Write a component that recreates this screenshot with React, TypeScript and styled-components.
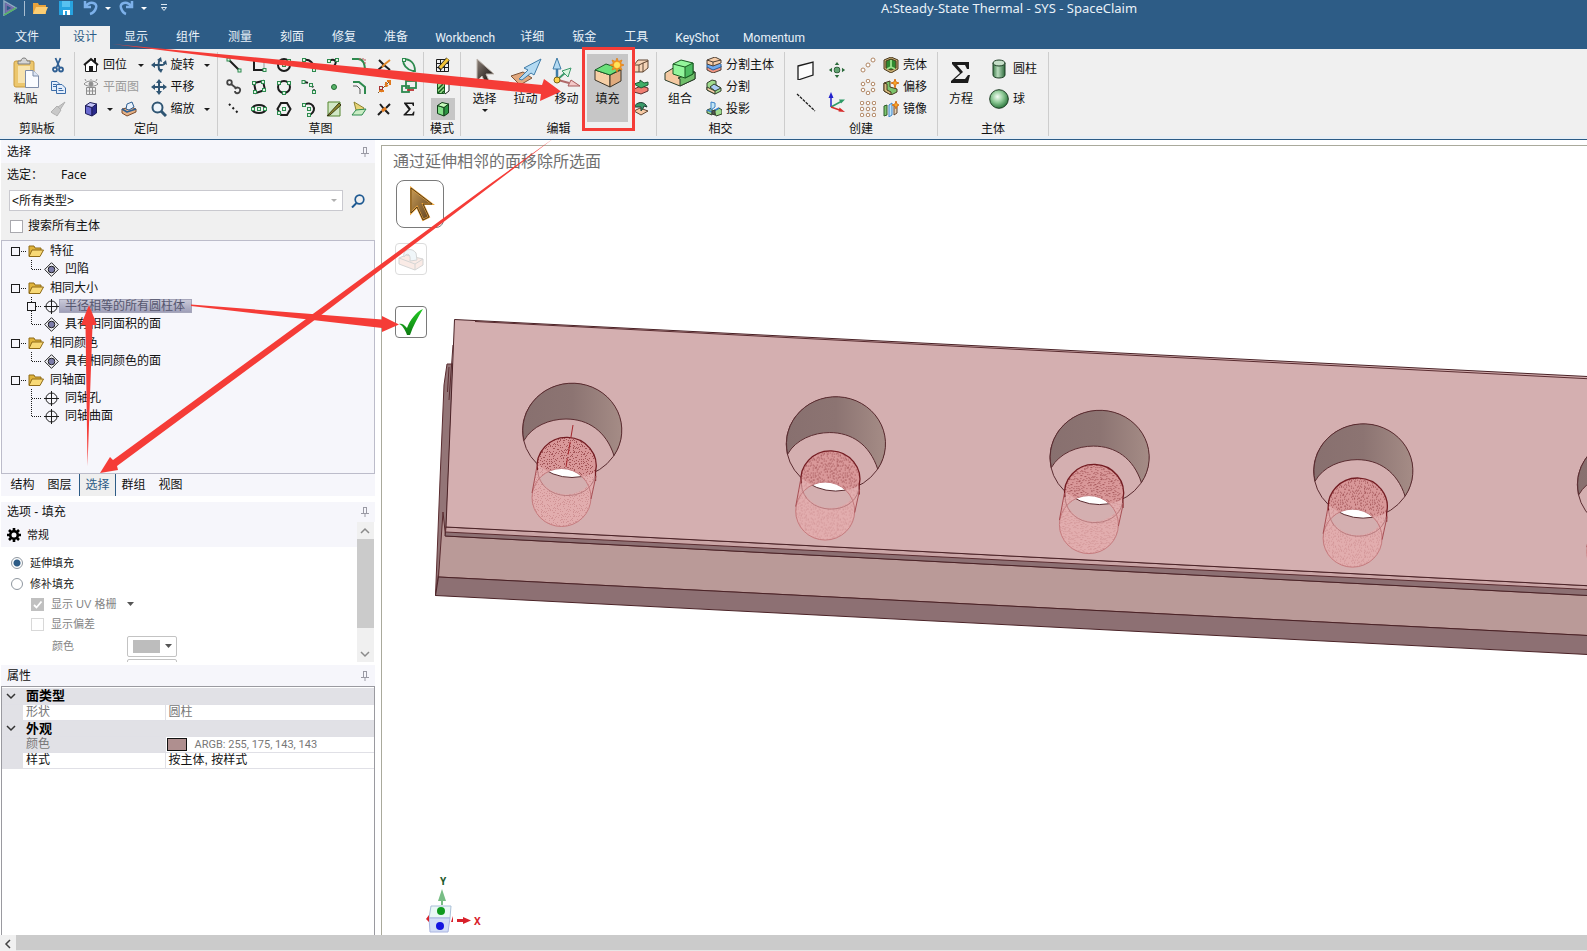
import React from "react";
import styled, { createGlobalStyle, css } from "styled-components";

const GlobalStyle = createGlobalStyle`
  * { box-sizing: border-box; }
  html, body { margin: 0; padding: 0; }
  body {
    background: #fff;
    color: #111;
    font: 12px/16px "Liberation Sans", "Noto Sans CJK SC", sans-serif;
    overflow: hidden;
  }
  button, input, select { font: inherit; color: inherit; margin: 0; }
  button { background: none; border: 0; padding: 0; cursor: default; }
  svg { display: block; flex: none; }
`;

/* ---------- icons ---------- */

const K = "#1c1c1c";
const G = "#2d8a4e";

const Dots = ({ at, c = G }: { at: number[][]; c?: string }) => (
  <>
    {at.map(([x, y], i) => (
      <rect key={i} x={x - 1.5} y={y - 1.5} width="3" height="3" fill="#dff2e4" stroke={c} />
    ))}
  </>
);

const Cube = ({ top, left, right, line }: { top: string; left: string; right: string; line: string }) => (
  <g stroke={line} strokeLinejoin="round">
    <path d="M2.500 4.500 9 6.500V15L2.500 12.500Z" fill={left} />
    <path d="M9 6.500 13.500 3V12L9 15Z" fill={right} />
    <path d="M2.500 4.500 7 1.500 13.500 3 9 6.500Z" fill={top} />
  </g>
);

const icons: Record<string, React.ReactNode> = {
  cut: (
    <g fill="none" stroke="#2f5f93" strokeWidth="1.800">
      <path d="M5.500 1 9.500 10.500M10.500 1 6.500 10.500" />
      <circle cx="5" cy="12.500" r="2" />
      <circle cx="11" cy="12.500" r="2" />
    </g>
  ),
  copy: (
    <g fill="#e4eefb" stroke="#3b6ca8">
      <path d="M1.500 2.500H7L9.500 5V11.500H1.500Z" />
      <path d="M6.500 5.500H12L15.500 9V14.500H6.500Z" />
      <path d="M3 5.500H6M3 7.500H6M8.500 9.500H12M8.500 11.500H13.500" />
    </g>
  ),
  brush: (
    <g fill="#c8c8c8" stroke="#b0b0b0">
      <path d="M15 1 8 6 10 9Z" />
      <path d="M7 5 11 9 7 15C5 13 3 13 1 11Z" />
    </g>
  ),
  home: (
    <g>
      <path d="M2.500 7.500V14.500H13.500V7.500L8 2.500Z" fill="#fff" stroke={K} />
      <path d="M1 8 8 2 15 8" fill="none" stroke={K} strokeWidth="2" />
      <path d="M6 9H10V14H6ZM11 1H13V5H11Z" fill={K} />
    </g>
  ),
  plan: (
    <g fill="none" stroke="#8f8f8f">
      <path d="M1 5C4 1 12 1 15 5 12 8 4 8 1 5Z" />
      <circle cx="8" cy="5" r="2" fill="#8f8f8f" />
      <path d="M3.500 8.500H12.500V15.500H3.500ZM3.500 12H12.500M6.500 8.500V15.500M9.500 8.500V15.500M3 2 2 0M8 1V-1M13 2 14 0" />
    </g>
  ),
  cubeBlue: <Cube top="#c4c4f8" left="#6a6ad0" right="#2a2a8c" line="#1c1c5a" />,
  snap: (
    <g strokeLinejoin="round">
      <path d="M1 8V12L6 15 15 11V8L10 6Z" fill="#e6b184" stroke="#7a4a2c" />
      <path d="M1 8 6 11 15 8" fill="none" stroke="#2f5f93" strokeWidth="1.500" />
      <path d="M5 8 6 3 11 1 13 6 8 9Z" fill="#e8f2fc" stroke="#2f5f93" />
    </g>
  ),
  rotate: (
    <g fill="none" stroke="#2f5573" strokeWidth="2">
      <path d="M2 8H11C13 8 14 7 13 5M9 2C7 5 7 11 9 14" />
      <path d="M0 8 4 5V11ZM6 3 10 0 11 5ZM12 6 15 3 16 8ZM7 12 12 12 10 16Z" fill="#2f5573" stroke="none" />
    </g>
  ),
  pan: (
    <g fill="#2f5573">
      <path d="M7 3H9V7H13V9H9V13H7V9H3V7H7Z" />
      <path d="M8 0 11 4H5ZM8 16 5 12H11ZM0 8 4 5V11ZM16 8 12 11V5Z" />
    </g>
  ),
  zoom: (
    <g fill="none" stroke="#2f5573">
      <circle cx="6.500" cy="6.500" r="5" fill="#eef5fb" strokeWidth="2" />
      <path d="M10 10 15 15" strokeWidth="3" />
    </g>
  ),
  s1: (<g><path d="M3 3 13 13" stroke={K} strokeWidth="2" /><Dots at={[[2.500, 2.500], [13.500, 13.500]]} /></g>),
  s2: (<g><path d="M3 3V13H13" stroke={K} strokeWidth="2" fill="none" /><path d="M3 3H13V13" stroke="#999" fill="none" /><Dots at={[[13.500, 13]]} /></g>),
  s3: (<g><circle cx="8" cy="8" r="6" fill="none" stroke={K} strokeWidth="2" /><path d="M8 8 12 5" stroke={G} /><Dots at={[[8, 8], [13, 4]]} /></g>),
  s4: (<g><path d="M3 3C9 2 13 6 13 13" fill="none" stroke={K} strokeWidth="2" /><path d="M8 8 13 13" stroke="#b33" /><Dots at={[[3, 3], [8, 8], [13, 13]]} /></g>),
  s5: (<g><path d="M3 4C8 1 12 4 8 9" fill="none" stroke={K} strokeWidth="2" /><Dots at={[[3, 4], [11, 3], [8, 11]]} /></g>),
  s6: (<g><path d="M1 2H7C12 2 14 6 14 14" fill="none" stroke={G} strokeWidth="2" /><path d="M8 2H14V7" stroke="#b55" strokeDasharray="2 1" fill="none" /></g>),
  s7: (<g fill="none" strokeWidth="2"><path d="M2 13 8 8 14 13M3 3 8 8" stroke={K} /><path d="M6 10 9 7 14 3" stroke="#e38b2d" /></g>),
  s8: (<g><path d="M2 2C9 2 14 6 14 14L12 14C4 12 2 7 2 2" fill="none" stroke={G} strokeWidth="1.800" /><Dots at={[[3, 3]]} /></g>),
  s9: (<g fill="none" stroke="#444" strokeWidth="1.800"><circle cx="3.500" cy="3.500" r="2.300" /><path d="M5 5 10 9" /><path d="M9 10C11 7 15 9 14 12S9 15 9 12" /></g>),
  s10: (<g><path d="M3 4 12 2 14 11 5 14Z" fill="none" stroke={K} strokeWidth="2" /><Dots at={[[3, 4], [12, 3], [13, 11], [4, 13]]} /></g>),
  s11: (<g><circle cx="8" cy="8" r="6" fill="none" stroke={K} strokeWidth="2" /><Dots at={[[3, 4], [13, 4], [8, 14]]} /></g>),
  s12: (<g><path d="M2 3C9 3 13 7 13 13" fill="none" stroke={K} strokeWidth="2" strokeDasharray="5 2" /><Dots at={[[2.500, 3], [10, 6], [13, 13]]} /></g>),
  s13: <circle cx="8" cy="8" r="2.500" fill="#58b368" stroke="#236b35" />,
  s14: (<g fill="none"><path d="M2 3H8L14 8V15" stroke={G} strokeWidth="2" /><path d="M2 7H6L9 10V15" stroke="#555" /></g>),
  s15: (<g fill="none"><path d="M2 14 14 2" stroke="#7a5a30" /><path d="M4 9 6 13M3 12H8M9 5 12 7M10 3V8M11 2H14V6" stroke="#e07a1f" strokeWidth="2" /><Dots at={[[5, 9]]} c="#a33" /></g>),
  s16: (<g fill="none" strokeWidth="1.800"><rect x="5" y="2" width="10" height="7" stroke={G} /><rect x="1" y="7" width="7" height="6" stroke={G} /><path d="M6 11H13" stroke="#b33" /></g>),
  s17: (<path d="M3 3 13 13" stroke={K} strokeWidth="2" strokeDasharray="2 3" />),
  s18: (<g><ellipse cx="8" cy="8" rx="7" ry="4" fill="none" stroke={K} strokeWidth="2" /><Dots at={[[8, 8], [2, 8], [14, 8]]} /></g>),
  s19: (<g><path d="M5 2H11L14.500 8 11 14H5L1.500 8Z" fill="none" stroke={K} strokeWidth="2" /><Dots at={[[8, 8], [3, 12]]} /></g>),
  s20: (<g><path d="M3 4C10-1 18 8 9 14" fill="none" stroke={K} strokeWidth="2" /><Dots at={[[3, 4], [8, 8], [8, 14]]} /></g>),
  s21: (<g><path d="M2 1H14V15H2Z" fill="#d2e8c5" stroke="#55852e" /><path d="M1 15 13 2 15 4 4 14Z" fill="#8e8a2f" stroke="#3b3a15" /></g>),
  s22: (<g><path d="M3 1 13 7 10 13 5 9Z" fill="#e9d476" stroke="#8a8230" /><path d="M1 14 5 9 15 8 11 14Z" fill="#c9ecc4" stroke={G} /></g>),
  s23: (<g fill="none" strokeWidth="2"><path d="M2 14 6 10M10 7 14 3" stroke={K} /><path d="M4 3 8 8 13 13" stroke={K} /><path d="M6 10 10 7" stroke="#e07a1f" strokeWidth="3" /></g>),
  sigma: (<path d="M3 1.500H13V5H12L11 3H6L10 8 5.500 13H11L12.500 10.500H13.500L13 14.500H2.500V13.500L7.500 8.500 3 2.500Z" fill={K} />),
  grid: (
    <g fill="none" stroke={K}>
      <path d="M1.500 2.500H13.500V14.500H1.500ZM5.500 2.500V14.500M9.500 2.500V14.500M1.500 6.500H13.500M1.500 10.500H13.500" />
      <path d="M4 12 13 2" stroke="#222" strokeWidth="4.500" />
      <path d="M5 11 13 2" stroke="#f2c437" strokeWidth="3" />
    </g>
  ),
  section: (<g><path d="M8 5 12 2H14V12L10 15" fill="#fff" stroke="#222" /><path d="M2.500 4.500H9.500V14.500H2.500Z" fill="#9be08c" stroke="#185a20" /><path d="M3 10 8 5M3 14 9 8M7 14 9 12" stroke="#185a20" strokeWidth="1.500" /></g>),
  cubeGreen: <Cube top="#c6f9bb" left="#82e088" right="#2c9342" line="#123f1a" />,
  e1: (<g><path d="M1 8 5 3H15V11L10 15H1Z" fill="#f6d5b8" stroke="#5f4430" /><path d="M6 15V8L10 6V15M10 6 15 4M1 8H6" stroke="#5f4430" fill="none" /></g>),
  e2: (<g><path d="M1 10 8 7 15 9V12L8 15 1 13Z" fill="#f07f72" stroke="#5f3030" /><path d="M1 5 7 3V1L11 4 15 3V6L8 9Z" fill="#3fae68" stroke="#1d5a34" /></g>),
  e3: (<g><path d="M1 10 7 7 15 10 8 14Z" fill="#f6c9a5" stroke="#5f4430" /><path d="M1 6C4 0 12 0 14 6L11 5C10 8 9 9 8 10V6H4Z" fill="#3a9a6a" stroke="#1d3f34" /></g>),
  splitBody: (
    <g strokeLinejoin="round" stroke="#4e4036">
      <path d="M1 10V13L7 16 15 13V9L8 8Z" fill="#f39582" />
      <path d="M1 7V10L7 13 15 10V7" fill="#6ea9ee" stroke="#2b5c96" />
      <path d="M1 3V7L7 9 15 6V3L9 0Z" fill="#f7cda8" />
      <path d="M1 3 7 5 15 3M7 5V9" fill="none" />
    </g>
  ),
  split: (
    <g strokeLinejoin="round" stroke="#33402c">
      <path d="M1 4 6 1 10 2V6L15 9V12L9 15 1 11Z" fill="#9fdc8e" />
      <path d="M4 8 8 5 15 9 9 12Z" fill="#a9ccf2" />
      <path d="M1 11 9 15V12L1 8Z" fill="#f5cba6" />
    </g>
  ),
  project: (
    <g strokeLinejoin="round" stroke="#33402c">
      <path d="M1 9 6 7V14L1 12ZM8 10 13 7 16 9V13L10 15Z" fill="#9fdc8e" />
      <path d="M5 1V9L9 6V2Z" fill="#c4e7f4" stroke="#3b83c8" />
      <path d="M1 9 6 11 13 7" fill="none" stroke="#3b83c8" strokeWidth="1.500" />
      <path d="M6 10 9 9V14L6 13Z" fill="#555" />
    </g>
  ),
  plane: (<path d="M2 6 17 2V15L2 20Z" fill="#fcfcfc" stroke={K} strokeWidth="1.300" />),
  axis: (<path d="M1 2 19 19" stroke={K} strokeDasharray="3 1" strokeWidth="1.200" />),
  point: (
    <g fill="#2d6b3c">
      <rect x="7" y="7" width="6" height="6" rx="2" fill="#63a573" stroke="#24552f" />
      <path d="M10 1 12.500 4.500H7.500ZM10 19 7.500 15.500H12.500ZM1 10 4.500 7.500V12.500ZM19 10 15.500 12.500V7.500Z" />
    </g>
  ),
  csys: (
    <g fill="none" strokeWidth="1.500">
      <path d="M4 15V3" stroke="#2222cc" /><path d="M1.500 6 4 0 6.500 6Z" fill="#2222cc" />
      <path d="M4 15 15 9" stroke="#2d9a66" /><path d="M12 7.500 18 7.500 14 11.500Z" fill="#2d9a66" />
      <path d="M4 15 14 18.500" stroke="#d62b2b" /><path d="M12.500 15.500 18 20 11.500 19.500Z" fill="#d62b2b" />
    </g>
  ),
  patLine: (<g fill="#fff" stroke="#b08663"><circle cx="3" cy="13" r="2" /><circle cx="8" cy="8" r="2" /><circle cx="13" cy="3" r="2" /></g>),
  patCircle: (
    <g fill="#fff" stroke="#b08663">
      {[[8, 2], [13, 5], [13, 11], [8, 14], [3, 11], [3, 5]].map(([x, y]) => <circle key={`${x}-${y}`} cx={x} cy={y} r="1.800" />)}
    </g>
  ),
  patGrid: (
    <g fill="#fff" stroke="#b08663">
      {[2, 8, 14].map((x) => [2, 8, 14].map((y) => <circle key={`${x}-${y}`} cx={x} cy={y} r="1.800" />))}
    </g>
  ),
  shell: (<g strokeLinejoin="round" stroke="#4a3a20"><path d="M1 3 8 0 15 3V12L8 16 1 12Z" fill="#c9ad72" /><path d="M3 4 8 2 13 4V11L8 13 3 11Z" fill="#2f8a30" /><path d="M8 3V10L4 12M8 10 12 12" fill="none" stroke="#9be08c" strokeWidth="1.800" /></g>),
  offset: (<g strokeLinejoin="round" stroke="#4a3a20"><path d="M1 4 7 2V8L14 10V13L8 16 1 12Z" fill="#7cc46c" /><path d="M1 4V12L8 16V13L4 11V5Z" fill="#d7bb80" /><path d="M12 0 13 3 16 4 13 5 12 9 11 5 8 4 11 3Z" fill="#f9a826" stroke="#d8761a" /></g>),
  mirror: (<g strokeLinejoin="round"><path d="M1 5 4 4V14L1 15Z" fill="#7cc46c" stroke="#2d5a2a" /><path d="M6 4 9 2V14L6 16Z" fill="#bfe3f7" stroke="#3b83c8" /><path d="M11 5 14 4V12L11 14Z" fill="#e8d2b2" stroke="#5f4430" /><path d="M13 0 14 3 16 4 14 5 13 8 12 5 9 4 12 3Z" fill="#f9a826" stroke="#d8761a" /></g>),
  cylinder: (
    <g stroke="#1d3d24">
      <path d="M4 4V16C4 20 16 20 16 16V4Z" fill="url(#cyl)" />
      <ellipse cx="10" cy="4" rx="6" ry="3" fill="#c5dfc8" />
    </g>
  ),
  ball: <circle cx="10" cy="10" r="9.300" fill="url(#ball)" stroke="#1d3d24" />,
  paste: (
    <g strokeLinejoin="round">
      <rect x="4" y="4" width="20" height="26" rx="2" fill="#ecc76e" stroke="#c89a3c" />
      <path d="M8 7V4H11C11 0 17 0 17 4H20V7Z" fill="#d5d5d5" stroke="#7d7d7d" />
      <path d="M8 9H20V26H8Z" fill="#f7e3ae" />
      <path d="M15.500 13.500H23L28.500 19V30.500H15.500Z" fill="#fafcff" stroke="#7d8ca8" />
      <path d="M23 13.500V19H28.500" fill="#dce6f5" stroke="#7d8ca8" />
    </g>
  ),
  arrow: <path d="M8 2V24L13 19 17 28 21 26 17 17H25Z" fill="url(#dark)" stroke="#bdb5ad" />,
  pull: (
    <g strokeLinejoin="round">
      <path d="M1 19 13 15 22 21 10 28Z" fill="#e2a97e" stroke="#7d5438" />
      <path d="M31 2 14 11 18 13 9 22 12 23 21 16 24 18Z" fill="#b4daf2" stroke="#3f7ca8" />
    </g>
  ),
  move: (
    <g strokeLinejoin="round">
      <path d="M6 22V9" stroke="#3f7ca8" strokeWidth="2.500" />
      <path d="M6 1 2 12H10Z" fill="#b4daf2" stroke="#3f7ca8" />
      <path d="M7 22 14 16" stroke="#3a9a6a" strokeWidth="2" />
      <path d="M20 11 17 20 11 14Z" fill="#d9f5df" stroke="#3a9a6a" />
      <path d="M7 23 18 26" stroke="#b06a6a" strokeWidth="2" />
      <path d="M29 29 17 29 20 23Z" fill="#f4c9c9" stroke="#a85a5a" />
      <circle cx="6" cy="23" r="3" fill="#ffd24a" stroke="#7a6414" />
    </g>
  ),
  fill: (
    <g strokeLinejoin="round" stroke="#3d3528">
      <path d="M3 13V23L18 30V18Z" fill="#f6cfa6" />
      <path d="M18 18V30L29 24V13Z" fill="#e0ab7e" />
      <path d="M3 13 14 7 29 12 18 18Z" fill="#6be07a" stroke="#1b5b28" />
      <path d="M25 1 26.500 4.500 30 3 28.500 6.500 32 8 28.500 9.500 30 13 26.500 11.500 25 15 23.500 11.500 20 13 21.500 9.500 18 8 21.500 6.500 20 3 23.500 4.500Z" fill="#f79a1e" stroke="#e0801a" strokeWidth=".8" />
      <circle cx="25" cy="8" r="3" fill="#ffe45a" stroke="none" />
    </g>
  ),
  combine: (
    <g strokeLinejoin="round" stroke="#2a3d2a">
      <path d="M1 16 11 10 31 15V22L16 29 1 23Z" fill="#f4c9a2" />
      <path d="M14 21 31 15V22L16 29V22Z" fill="#6fbf6a" />
      <path d="M9 7 17 3 29 6V17L21 21 9 17Z" fill="#93f59c" stroke="#185a20" />
      <path d="M21 10 29 6V17L21 21Z" fill="#4dbd62" stroke="#185a20" />
      <path d="M9 7 21 10" stroke="#185a20" />
    </g>
  ),
  equation: (<path d="M7 5H24V12H22L20 8H12L18 15 10 22H20L23 18H25L23 26H6V24L15 16 7 7Z" fill={K} />),
};

const Defs = () => (
  <DefsSvg width="0" height="0" aria-hidden>
    <defs>
      <linearGradient id="cyl"><stop offset="0" stopColor="#3b7a48" /><stop offset=".4" stopColor="#b9dcbd" /><stop offset="1" stopColor="#2d6b3c" /></linearGradient>
      <radialGradient id="ball" cx=".42" cy=".38" r=".62"><stop offset="0" stopColor="#f4fcf4" /><stop offset=".5" stopColor="#8fca97" /><stop offset="1" stopColor="#2f7a40" /></radialGradient>
      <linearGradient id="dark" x2="1" y2="1"><stop offset="0" stopColor="#8d8279" /><stop offset=".7" stopColor="#2e2724" /></linearGradient>
      <linearGradient id="gold" x2="1" y2="1"><stop offset="0" stopColor="#c79a55" /><stop offset="1" stopColor="#5b3f1e" /></linearGradient>
      <linearGradient id="tick" x2="0" y2="1"><stop offset="0" stopColor="#22cc22" /><stop offset="1" stopColor="#0d7a12" /></linearGradient>
      <linearGradient id="bore"><stop offset="0" stopColor="#88706f" /><stop offset=".5" stopColor="#8c7472" /><stop offset="1" stopColor="#a58c86" /></linearGradient>
    </defs>
  </DefsSvg>
);

const Icon = ({ n, s = 16, box = 16 }: { n: string; s?: number; box?: number }) => (
  <svg width={s} height={s} viewBox={`0 0 ${box} ${box}`} aria-hidden>{icons[n]}</svg>
);

const Pin = () => (
  <svg width="8" height="10" viewBox="0 0 8 10" fill="none" stroke="#9a9aa4" aria-hidden>
    <path d="M2.500 1V6M5.500 1V6M2 .5H6M0 6.500H8M4 7V10" />
  </svg>
);

const Caret = ({ c = K }: { c?: string }) => (
  <svg width="6" height="3" viewBox="0 0 6 3" aria-hidden><path d="M0 0H6L3 3Z" fill={c} /></svg>
);

/* ---------- styled parts ---------- */

const DefsSvg = styled.svg`position: absolute;`;

const Window = styled.div`
  position: relative;
  display: flex;
  flex-direction: column;
  height: 100vh;
  overflow: hidden;
`;

const Header = styled.header`background: #2d5c86; color: #e9f1f8;`;

const TitleBar = styled.div`
  display: flex;
  height: 26px;
  align-items: flex-start;
`;

const QuickBar = styled.div`
  display: flex;
  align-items: center;
  height: 16px;
  width: 176px;
  padding-left: 2px;
  gap: 6px;
`;

const QuickButton = styled.button<{ $w: number }>`
  display: flex;
  align-items: center;
  justify-content: space-between;
  width: ${(p) => p.$w}px;
  height: 16px;
`;

const QuickDivider = styled.span`width: 1px; height: 15px; background: #a9bed1;`;

const Title = styled.h1`
  flex: 1;
  margin: 0;
  padding-left: 255px;
  text-align: center;
  font: 13px/16px "Noto Sans", sans-serif;
`;

const TabStrip = styled.nav`display: flex; height: 23px;`;

const RibbonTab = styled.button<{ $active?: boolean; $first?: boolean; $latin?: boolean }>`
  height: 23px;
  padding: 0 14px 2px;
  white-space: nowrap;
  ${(p) => p.$latin && css`font-family: Roboto, sans-serif; padding: 0 11px 0 13px;`}
  ${(p) => p.$first && css`padding: 0 21px 2px 15px;`}
  ${(p) => p.$active && css`background: #f0f0f0; color: #2d5c86; padding: 0 13px 2px;`}
`;

const Ribbon = styled.div`
  display: flex;
  height: 91px;
  padding-top: 3px;
  background: #f0f0f0;
  border-bottom: 1px solid #2d5c86;
  box-shadow: inset 0 -3px #e9eff5;
`;

const Group = styled.section<{ $w: number }>`
  display: flex;
  flex-direction: column;
  width: ${(p) => p.$w}px;
  height: 84px;
  border-right: 1px solid #cdcdcd;
`;

const GroupBody = styled.div<{ $pad?: number; $gap?: number }>`
  display: flex;
  gap: ${(p) => p.$gap ?? 0}px;
  height: 71px;
  padding-top: 2px;
  padding-left: ${(p) => p.$pad ?? 0}px;
`;

const GroupName = styled.h2`
  margin: 0;
  text-align: center;
  font-size: 12px;
  line-height: 12px;
  font-weight: 400;
`;

const Column = styled.div<{ $w?: number; $row?: number }>`
  display: grid;
  grid-auto-rows: ${(p) => p.$row ?? 22}px;
  align-content: start;
  width: ${(p) => (p.$w ? `${p.$w}px` : "auto")};
`;

const Tool = styled.button<{ $off?: boolean; $on?: boolean; $center?: boolean }>`
  display: flex;
  align-items: center;
  justify-content: ${(p) => (p.$center ? "center" : "flex-start")};
  gap: 4px;
  white-space: nowrap;
  color: ${(p) => (p.$off ? "#9b9b9b" : "inherit")};
  background: ${(p) => (p.$on ? "#c6c6c6" : "none")};
`;

const ToolCaret = styled.span`margin-left: auto; padding-right: 7px;`;

const SplitRow = styled.div`display: flex; align-items: center; gap: 8px;`;

const BigTool = styled.button<{ $w: number; $on?: boolean }>`
  display: flex;
  flex-direction: column;
  align-items: center;
  width: ${(p) => p.$w}px;
  height: 68px;
  padding-top: 3px;
  line-height: 20px;
  background: ${(p) => (p.$on ? "#c6c6c6" : "none")};
`;

const SketchGrid = styled.div`
  display: grid;
  grid-template-columns: repeat(8, 25px);
  grid-auto-rows: 22px;
`;

const Main = styled.main`display: flex; flex: 1; min-height: 0; background: #fff;`;

const Side = styled.aside`
  display: flex;
  flex-direction: column;
  width: 375px;
  flex: none;
  padding-left: 1px;
`;

const PanelHead = styled.h2<{ $h: number }>`
  display: flex;
  align-items: center;
  justify-content: space-between;
  height: ${(p) => p.$h}px;
  margin: 0;
  padding: 0 6px;
  background: #f6f6fb;
  font-size: 12px;
  font-weight: 400;
`;

const Filter = styled.div`
  display: flex;
  flex-direction: column;
  height: 77px;
  padding: 4px 10px 0 8px;
  background: #f0f0f0;
`;

const Picked = styled.p`
  display: flex;
  gap: 18px;
  margin: 0 0 7px -2px;
  & > span:last-child { font-family: "Noto Sans", sans-serif; }
`;

const SearchRow = styled.div`display: flex; align-items: center; gap: 8px;`;

const TypeBox = styled.div`
  display: grid;
  grid-template-columns: 1fr 16px;
  align-items: center;
  flex: 1;
  height: 21px;
  background: #fff;
  border: 1px solid #c9c9cf;
`;

const TypeSelect = styled.select`
  grid-area: 1 / 1 / 2 / 3;
  appearance: none;
  height: 19px;
  padding: 0 2px;
  border: 0;
  background: transparent;
`;

const TypeCaret = styled.span`grid-area: 1 / 2; pointer-events: none; padding-left: 5px;`;

const Check = styled.input<{ $off?: boolean }>`
  appearance: none;
  flex: none;
  width: 13px;
  height: 13px;
  background: #fff;
  border: 1px solid ${(p) => (p.$off ? "#d8d8d8" : "#a9a9ae")};
  &:checked { border-color: #c0c0c0; background: #c0c0c0; }
`;

const CheckBoxWrap = styled.span`
  display: grid;
  & > * { grid-area: 1 / 1; }
  & > svg { pointer-events: none; }
`;

const AllBodies = styled.label`display: flex; align-items: center; gap: 5px; margin-top: 6px; margin-left: 1px; height: 18px;`;

const Tree = styled.ul`
  list-style: none;
  height: 234px;
  margin: 0;
  padding: 1px 0 0;
  background: #f6f6fb;
  border: 1px solid #bcbcca;
  & ul { list-style: none; margin: 0 0 1px; padding: 0; }
`;

const Node = styled.div<{ $child?: boolean }>`
  display: flex;
  align-items: center;
  height: 18px;
  padding-left: ${(p) => (p.$child ? 25 : 9)}px;
`;

const NodeText = styled.span<{ $on?: boolean }>`
  height: 14px;
  line-height: 14px;
  padding: 0 7px 0 6px;
  ${(p) => p.$on && css`color: #55566e; background: linear-gradient(#cdcddb, #9c9cb6); box-shadow: inset 0 0 0 1px #a6a6ba;`}
`;

const SideTabs = styled.nav`display: flex; height: 22px; padding-left: 4px; background: #f6f6fb;`;

const SideTab = styled.button<{ $on?: boolean }>`
  width: 37px;
  padding: 0 2px 1px 0;
  ${(p) => p.$on && css`padding-right: 0; color: #2d5c86; background: #efefef; border: solid #2d5c86; border-width: 0 1px;`}
`;

const Spacer = styled.div`height: 6px; flex: none;`;

const Options = styled.div`display: flex; height: 140px; margin-bottom: 3px; overflow: hidden; font-size: 11px;`;
const OptionBody = styled.div`flex: 1; min-width: 0;`;

const Section = styled.h3`
  display: flex;
  align-items: center;
  gap: 6px;
  height: 25px;
  margin: 0 0 5px;
  padding-left: 6px;
  background: #f6f6fb;
  font-size: 11px;
  font-weight: 400;
`;

const Option = styled.label<{ $indent: number; $off?: boolean }>`
  display: flex;
  align-items: center;
  gap: 7px;
  height: ${(p) => (p.$off ? 20 : 21)}px;
  padding-left: ${(p) => p.$indent}px;
  color: ${(p) => (p.$off ? "#858585" : "#222")};
  & > svg { margin-left: 4px; }
`;

const Radio = styled.input`
  appearance: none;
  flex: none;
  width: 12px;
  height: 12px;
  border: 1px solid #8f979f;
  border-radius: 50%;
  background: #fff;
  &:checked { background: radial-gradient(circle, #2d5c86 0 3px, #fff 4px); }
`;

const ColorRow = styled.div`
  display: flex;
  align-items: center;
  height: 20px;
  margin: 2px 0 3px;
  padding-left: 51px;
  color: #858585;
`;

const ColorName = styled.span`width: 75px;`;

const ColorButton = styled.button`
  display: flex;
  align-items: center;
  gap: 5px;
  width: 50px;
  height: 21px;
  padding-left: 5px;
  border: 1px solid #c3c3c3;
  border-radius: 2px;
  background: #fff;
`;

const Swatch = styled.span<{ $w: number; $c: string; $line?: string }>`
  display: block;
  flex: none;
  width: ${(p) => p.$w}px;
  height: 13px;
  background: ${(p) => p.$c};
  border: 1px solid ${(p) => p.$line ?? p.$c};
`;

const VScroll = styled.div`
  display: flex;
  flex-direction: column;
  width: 17px;
  margin-right: 1px;
  background: #f0f0f0;
  flex: none;
`;

const ScrollEnd = styled.button`
  display: grid;
  place-items: center;
  width: 16px;
  height: 17px;
  background: #f0f0f0;
`;

const VThumb = styled.div`height: 89px; background: #cbcbcb;`;
const VTrack = styled.div`flex: 1;`;

const Props = styled.div`flex: 1; padding-top: 1px; border: 1px solid #9a9aa0; border-bottom: 0;`;

const PropTable = styled.table`
  width: 100%;
  border-collapse: collapse;
  table-layout: fixed;
  line-height: 15px;
  & td, & th { height: 16px; padding: 0 0 0 3px; text-align: left; font-weight: 400; white-space: nowrap; border-bottom: 1px solid #e0e0e6; }
`;

const CategoryRow = styled.tr`
  background: #e1e1e6;
  && th { font-weight: 700; font-size: 13px; color: #000; }
  && td { padding-left: 4px; }
`;

const PropRow = styled.tr<{ $off?: boolean; $on?: boolean }>`
  color: ${(p) => (p.$off ? "#777" : "#111")};
  && td:first-child { background: #e1e1e6; border-color: #e1e1e6; }
  && th { background: ${(p) => (p.$on ? "#e1e1e6" : "#fff")}; border-right: 1px solid #e0e0e6; }
`;

const ColorValue = styled.span`
  display: flex;
  align-items: center;
  gap: 8px;
  margin-left: -2px;
  font: 11px/15px Roboto, sans-serif;
`;

const View = styled.section`
  position: relative;
  flex: 1;
  min-width: 0;
  margin: 5px 0 0 6px;
  padding: 7px 0 0 11px;
  border: solid #aaaa9c;
  border-width: 1px 0 0 1px;
  overflow: hidden;
`;

const Scene = styled.svg`position: absolute; inset: 0; width: 100%; height: 100%;`;

const Hint = styled.p`position: relative; margin: 0 0 9px; font-size: 16px; line-height: 18px; color: #707070;`;

const ViewTools = styled.div`
  position: relative;
  display: flex;
  flex-direction: column;
  align-items: flex-start;
  gap: 15px;
  padding-left: 2px;
`;

const ViewTool = styled.button<{ $big?: boolean; $off?: boolean; $apart?: boolean }>`
  display: grid;
  place-items: center;
  width: ${(p) => (p.$big ? 48 : 32)}px;
  height: ${(p) => (p.$big ? 48 : 32)}px;
  margin-top: ${(p) => (p.$apart ? 16 : 0)}px;
  margin-left: ${(p) => (p.$big ? 1 : 0)}px;
  border: 1px solid ${(p) => (p.$off ? "#dcdcdc" : "#7a7a7a")};
  border-radius: ${(p) => (p.$big ? 8 : 4)}px;
  background: #fff;
`;

const HScroll = styled.div`display: flex; height: 16px; flex: none; background: #cbcbcb; border-bottom: 1px solid #e6e6e6;`;

const Marks = styled.svg`position: absolute; inset: 0; width: 100%; height: 100%; pointer-events: none;`;

/* ---------- scene ---------- */

/* Scattered one-pixel dots, the same on every render. */
const stipple = (() => {
  let seed = 7;
  const next = () => (seed = (seed * 1103515245 + 12345) % 2147483648) / 2147483648;
  const out: string[] = [];
  for (let y = 0; y < 32; y += 2) {
    for (let x = 0; x < 32; x += 2) {
      const dx = next() > 0.5 ? 1 : 0;
      const dy = next() > 0.5 ? 1 : 0;
      if (next() > 0.3) out.push(`M${x + dx} ${y + dy}h1v1h-1z`);
    }
  }
  return out.join("");
})();

const Hole = ({ i }: { i: number }) => (
  <g transform={`translate(${263.7 * i} ${13.55 * i})`}>
    <ellipse cx="572" cy="430.500" rx="49.500" ry="47" fill="#d4afb0" stroke="#5a2c30" />
    <path d="M524 440.500A49.500 47 0 1 1 614 455.500C606 431 588 419 566 419 550 419 532 426 524 440.500Z" fill="url(#bore)" stroke="#5a2c30" />
    <path d="M537 466 531.500 497A29.500 28.500 0 0 0 591 499L596 466Z" fill="url(#lightDots)" />
    <ellipse cx="566.500" cy="466" rx="29.500" ry="28.500" fill="url(#lightDots)" />
    <g clipPath="url(#bigEnd)"><ellipse cx="566.500" cy="466" rx="29.500" ry="28.500" fill="url(#darkDots)" /></g>
    <g clipPath="url(#upperEnd)">
      <ellipse cx="561.500" cy="497.500" rx="29.500" ry="29" fill="#d4afb0" />
      <g clipPath="url(#lowerEnd)"><ellipse cx="572" cy="430.500" rx="49.500" ry="47" fill="#fff" stroke="#5a2c30" /></g>
    </g>
    <path d="M537.500 470A29.500 28.500 0 1 1 595.500 472V481" fill="none" stroke="#741c22" strokeWidth="1.300" />
    <path d="M537.500 470C540 503 590 503 595 476" fill="none" stroke="#b97c7f" />
    <ellipse cx="561.500" cy="497.500" rx="29.500" ry="29" fill="none" stroke="#c47b7e" />
    <path d="M537 466 532 493M596 476 591 499" stroke="#a84f54" />
  </g>
);

const Model = () => (
  <Scene aria-label="模型">
    <defs>
      <clipPath id="upperEnd"><ellipse cx="566.500" cy="466" rx="29.500" ry="28.500" /></clipPath>
      <clipPath id="lowerEnd"><ellipse cx="561.500" cy="497.500" rx="29.500" ry="29" /></clipPath>
      <clipPath id="bigEnd"><ellipse cx="572" cy="430.500" rx="49.500" ry="47" /></clipPath>
      <pattern id="darkDots" width="32" height="32" patternUnits="userSpaceOnUse">
        <rect width="32" height="32" fill="#d99899" />
        <path d={stipple} fill="#a35558" />
      </pattern>
      <pattern id="lightDots" width="32" height="32" patternUnits="userSpaceOnUse">
        <rect width="32" height="32" fill="#e2adae" />
        <path d={stipple} fill="#d19496" />
      </pattern>
    </defs>
    <g transform="translate(-382 -146)" strokeLinejoin="round">
      <path d="M447 364H453L446 532 438 577 435.500 595.500 440 480 444 385Z" fill="#937577" stroke="#5a2c30" />
      <path d="M445.500 536 1607 596.500V636.500L438.500 577 443 512Z" fill="#ba9a98" stroke="#5a2c30" />
      <path d="M438.500 577 1607 636.500V655.500L435.500 595.500Z" fill="#8d7073" stroke="#4a2226" />
      <path d="M446 527 1607 587V596.500L445 536Z" fill="#8d7073" stroke="#4a2226" />
      <path d="M446 527 1607 586.700V590.500L445.500 532Z" fill="#caa5a6" stroke="#5a2c30" />
      <path d="M454.500 319.500 1607 377.500V586.700L446 527Z" fill="#d4afb0" stroke="#4a2226" />
      <path d="M475 321.500 1607 379.700" stroke="#5a2c30" />
      <path d="M449 367 447.500 392M453 345 449 400" stroke="#5a2c30" fill="none" />
      {[0, 1, 2, 3, 4].map((i) => <Hole key={i} i={i} />)}
      <path d="M573 425 566 467" stroke="#a3262c" strokeDasharray="13 4" />
      <path d="M431 906H451L450 918H429Z" fill="#eaf8f6" stroke="#a9bfd8" />
      <path d="M429 918H450L448 932H430Z" fill="#d3ddf6" stroke="#a9b4e0" />
      <path d="M442 889 446 901H443V905H441V901H438Z" fill="#78bd85" />
      <circle cx="441" cy="911" r="4" fill="#0f9a1e" />
      <circle cx="440" cy="926" r="4" fill="#1414e0" />
      <path d="M429 915V922L426 919ZM453 916V922H451M457 919H463V917L471 920.500 463 924V922H457Z" fill="#d8202a" />
      <g fontFamily="Noto Sans, sans-serif" fontWeight="700" fontSize="10">
        <text x="440" y="885" fill="#1f5a2c">Y</text>
        <text x="474" y="925" fill="#d8202a">X</text>
      </g>
    </g>
  </Scene>
);

/* ---------- tree ---------- */

const Folder = () => (
  <svg width="16" height="14" viewBox="0 0 16 14" aria-hidden>
    <path d="M1 12V2H6L7 4H13V6" fill="#e0b43c" stroke="#8f6a17" />
    <path d="M1 12.500 4 6H15.500L12 12.500Z" fill="#f8d976" stroke="#8f6a17" />
  </svg>
);

const RootGuide = () => (
  <svg width="17" height="18" viewBox="0 0 17 18" fill="none" stroke={K} aria-hidden>
    <rect x=".5" y="5.500" width="8" height="8" /><path d="M10 9.500H16" strokeDasharray="1 1" />
  </svg>
);

const ChildGuide = ({ last, box }: { last?: boolean; box?: boolean }) => (
  <svg width="17" height="18" viewBox="0 0 17 18" fill="none" stroke={K} aria-hidden>
    <path d={last ? "M4.500 0V9.500M5 9.500H15" : "M4.500 0V18M5 9.500H15"} strokeDasharray="1 1" />
    {box && <rect x=".5" y="5.500" width="8" height="8" fill="#f6f6fb" />}
  </svg>
);

const FaceMark = ({ round }: { round?: boolean }) => (
  <svg width="15" height="15" viewBox="0 0 15 15" fill="none" stroke={K} aria-hidden>
    {round ? (
      <><circle cx="7.500" cy="7.500" r="5.500" /><path d="M7.500 0V15M0 7.500H15" /></>
    ) : (
      <><path d="M7.500 .7 14.300 7.500 7.500 14.300 .7 7.500Z" /><circle cx="7.500" cy="7.500" r="3.300" fill="#7c7ca8" /></>
    )}
  </svg>
);

type Leaf = { t: string; round?: boolean; on?: boolean };
const tree: { t: string; kids: Leaf[] }[] = [
  { t: "特征", kids: [{ t: "凹陷" }] },
  { t: "相同大小", kids: [{ t: "半径相等的所有圆柱体", round: true, on: true }, { t: "具有相同面积的面" }] },
  { t: "相同颜色", kids: [{ t: "具有相同颜色的面" }] },
  { t: "同轴面", kids: [{ t: "同轴孔", round: true }, { t: "同轴曲面", round: true }] },
];

const tabs = ["文件", "设计", "显示", "组件", "测量", "刻面", "修复", "准备", "Workbench", "详细", "钣金", "工具", "KeyShot", "Momentum"];

const sketch = [
  "s1", "s2", "s3", "s4", "s5", "s6", "s7", "s8",
  "s9", "s10", "s11", "s12", "s13", "s14", "s15", "s16",
  "s17", "s18", "s19", "s20", "s21", "s22", "s23", "sigma",
];

const Chevron = ({ d, c = "#8a8a8a" }: { d: string; c?: string }) => (
  <svg width="10" height="10" viewBox="0 0 10 10" fill="none" stroke={c} strokeWidth="1.500" aria-hidden><path d={d} /></svg>
);

const RowTools = ({ items }: { items: string[][] }) => (
  <Column>
    {items.map(([n, t]) => <Tool key={n}><Icon n={n} />{t}</Tool>)}
  </Column>
);

export default function App() {
  return (
    <Window>
      <GlobalStyle />
      <Defs />
      <Header>
        <TitleBar>
          <QuickBar>
            <svg width="16" height="16" viewBox="0 0 16 16" fill="none" strokeWidth="1.500" aria-hidden>
              <path d="M2 1V15L14 8Z" stroke="#8fa9c2" /><path d="M4 4V12L11 8Z" stroke="#7f6fae" /><path d="M2 15 14 8" stroke="#58b368" />
            </svg>
            <QuickDivider />
            <QuickButton $w={18} aria-label="打开">
              <svg width="18" height="16" viewBox="0 0 18 16"><path d="M2 14V3H7L8 5H15V14Z" fill="#e8a33c" /><path d="M2 14 5 7H17L14 14Z" fill="#fbcd73" /></svg>
            </QuickButton>
            <QuickButton $w={20} aria-label="保存">
              <svg width="20" height="16" viewBox="0 0 20 16"><path d="M4 1H18V15H4Z" fill="#27a3e0" /><path d="M7 1H15V7H7Z" fill="#58c1f0" /><path d="M8 10H15V15H8Z" fill="#fff" /><path d="M10 11H12V15H10Z" fill="#27a3e0" /></svg>
            </QuickButton>
            <QuickButton $w={30} aria-label="撤消">
              <svg width="18" height="16" viewBox="0 0 18 16" fill="none" stroke="#7db1ea" strokeWidth="2.500"><path d="M4 1V7H10M4 7C9 0 17 3 15 8 14 11 12 13 9 14" /></svg>
              <Caret c="#fff" />
            </QuickButton>
            <QuickButton $w={30} aria-label="恢复">
              <svg width="18" height="16" viewBox="0 0 18 16" fill="none" stroke="#7db1ea" strokeWidth="2.500"><path d="M15 1V7H9M15 7C10 0 2 3 4 8 5 11 6 13 9 14" /></svg>
              <Caret c="#fff" />
            </QuickButton>
            <QuickButton $w={16} aria-label="自定义">
              <svg width="16" height="8" viewBox="0 0 16 8" fill="none" stroke="#dce8f2"><path d="M8 .5H14M8.500 3.500H13.500L11 6.500Z" /></svg>
            </QuickButton>
          </QuickBar>
          <Title>A:Steady-State Thermal - SYS - SpaceClaim</Title>
        </TitleBar>
        <TabStrip>
          {tabs.map((t, i) => (
            <RibbonTab key={t} $first={i === 0} $active={i === 1} $latin={/^[A-Z]/.test(t)}>{t}</RibbonTab>
          ))}
        </TabStrip>
      </Header>

      <Ribbon>
        <Group $w={75}>
          <GroupBody $pad={2} $gap={1}>
            <BigTool $w={47}><Icon n="paste" s={32} box={32} />粘贴</BigTool>
            <Column>
              {["cut", "copy", "brush"].map((n) => <Tool key={n}><Icon n={n} /></Tool>)}
            </Column>
          </GroupBody>
          <GroupName>剪贴板</GroupName>
        </Group>

        <Group $w={143}>
          <GroupBody $pad={8}>
            <Column $w={68}>
              <Tool><Icon n="home" />回位<ToolCaret><Caret /></ToolCaret></Tool>
              <Tool $off><Icon n="plan" />平面图</Tool>
              <SplitRow>
                <Tool><Icon n="cubeBlue" /></Tool><Caret /><Tool><Icon n="snap" /></Tool>
              </SplitRow>
            </Column>
            <Column $w={67}>
              <Tool><Icon n="rotate" />旋转<ToolCaret><Caret /></ToolCaret></Tool>
              <Tool><Icon n="pan" />平移</Tool>
              <Tool><Icon n="zoom" />缩放<ToolCaret><Caret /></ToolCaret></Tool>
            </Column>
          </GroupBody>
          <GroupName>定向</GroupName>
        </Group>

        <Group $w={206}>
          <GroupBody $pad={3}>
            <SketchGrid>
              {sketch.map((n) => <Tool key={n} $center><Icon n={n} /></Tool>)}
            </SketchGrid>
          </GroupBody>
          <GroupName>草图</GroupName>
        </Group>

        <Group $w={37}>
          <GroupBody $pad={7}>
            <Column $w={24}>
              <Tool $center><Icon n="grid" /></Tool>
              <Tool $center><Icon n="section" /></Tool>
              <Tool $center $on><Icon n="cubeGreen" /></Tool>
            </Column>
          </GroupBody>
          <GroupName>模式</GroupName>
        </Group>

        <Group $w={196}>
          <GroupBody $pad={3}>
            <BigTool $w={41}><Icon n="arrow" s={32} box={32} />选择<Caret /></BigTool>
            <BigTool $w={41}><Icon n="pull" s={32} box={32} />拉动</BigTool>
            <BigTool $w={41}><Icon n="move" s={32} box={32} />移动</BigTool>
            <BigTool $w={41} $on><Icon n="fill" s={32} box={32} />填充</BigTool>
            <Column $w={26}>
              {["e1", "e2", "e3"].map((n) => <Tool key={n} $center><Icon n={n} /></Tool>)}
            </Column>
          </GroupBody>
          <GroupName>编辑</GroupName>
        </Group>

        <Group $w={128}>
          <GroupBody $pad={2} $gap={5}>
            <BigTool $w={42}><Icon n="combine" s={32} box={32} />组合</BigTool>
            <RowTools items={[["splitBody", "分割主体"], ["split", "分割"], ["project", "投影"]]} />
          </GroupBody>
          <GroupName>相交</GroupName>
        </Group>

        <Group $w={153}>
          <GroupBody $pad={5}>
            <Column $w={31} $row={32}>
              <Tool $center><Icon n="plane" s={20} box={20} /></Tool>
              <Tool $center><Icon n="axis" s={20} box={20} /></Tool>
            </Column>
            <Column $w={31} $row={32}>
              <Tool $center><Icon n="point" s={18} box={20} /></Tool>
              <Tool $center><Icon n="csys" s={20} box={20} /></Tool>
            </Column>
            <Column $w={31}>
              {["patLine", "patCircle", "patGrid"].map((n) => <Tool key={n} $center><Icon n={n} /></Tool>)}
            </Column>
            <RowTools items={[["shell", "壳体"], ["offset", "偏移"], ["mirror", "镜像"]]} />
          </GroupBody>
          <GroupName>创建</GroupName>
        </Group>

        <Group $w={111}>
          <GroupBody $pad={2} $gap={7}>
            <BigTool $w={42}><Icon n="equation" s={32} box={32} />方程</BigTool>
            <Column $row={30}>
              <Tool><Icon n="cylinder" s={20} box={20} />圆柱</Tool>
              <Tool><Icon n="ball" s={20} box={20} />球</Tool>
            </Column>
          </GroupBody>
          <GroupName>主体</GroupName>
        </Group>
      </Ribbon>

      <Main>
        <Side>
          <PanelHead $h={23}>选择<Pin /></PanelHead>
          <Filter>
            <Picked><span>选定：</span><span>Face</span></Picked>
            <SearchRow>
              <TypeBox>
                <TypeSelect aria-label="类型"><option>&lt;所有类型&gt;</option></TypeSelect>
                <TypeCaret><Caret c="#b0b0b0" /></TypeCaret>
              </TypeBox>
              <button aria-label="搜索">
                <svg width="14" height="14" viewBox="0 0 14 14" fill="none" stroke="#1f5a92" strokeWidth="1.700"><circle cx="8.500" cy="5.500" r="4.300" /><path d="M5.500 9 1 13.500" strokeWidth="2" /></svg>
              </button>
            </SearchRow>
            <AllBodies><Check type="checkbox" />搜索所有主体</AllBodies>
          </Filter>
          <Tree>
            {tree.map((g) => (
              <li key={g.t}>
                <Node><RootGuide /><Folder /><NodeText>{g.t}</NodeText></Node>
                <ul>
                  {g.kids.map((k, i) => (
                    <li key={k.t}>
                      <Node $child>
                        <ChildGuide last={i === g.kids.length - 1} box={k.on} />
                        <FaceMark round={k.round} />
                        <NodeText $on={k.on}>{k.t}</NodeText>
                      </Node>
                    </li>
                  ))}
                </ul>
              </li>
            ))}
          </Tree>
          <SideTabs>
            {["结构", "图层", "选择", "群组", "视图"].map((t) => <SideTab key={t} $on={t === "选择"}>{t}</SideTab>)}
          </SideTabs>
          <Spacer />
          <PanelHead $h={20}>选项 - 填充<Pin /></PanelHead>
          <Options>
            <OptionBody>
              <Section>
                <svg width="14" height="14" viewBox="0 0 14 14" aria-hidden>
                  <circle cx="7" cy="7" r="3.800" fill="none" stroke="#000" strokeWidth="2.600" />
                  <path d="M7 0V3M7 11V14M0 7H3M11 7H14M2 2 4 4M10 10 12 12M12 2 10 4M4 10 2 12" stroke="#000" strokeWidth="2.600" />
                </svg>
                常规
              </Section>
              <Option $indent={10}><Radio type="radio" name="fill" defaultChecked />延伸填充</Option>
              <Option $indent={10}><Radio type="radio" name="fill" />修补填充</Option>
              <Option $indent={30} $off>
                <CheckBoxWrap>
                  <Check type="checkbox" $off defaultChecked disabled />
                  <svg width="13" height="13" viewBox="0 0 13 13" fill="none" stroke="#fff" strokeWidth="1.800"><path d="M3 7 5.500 9.500 10.500 3.500" /></svg>
                </CheckBoxWrap>
                显示 UV 格栅
                <svg width="7" height="4" viewBox="0 0 7 4"><path d="M0 0H7L3.500 4Z" fill="#555" /></svg>
              </Option>
              <Option $indent={30} $off><Check type="checkbox" $off disabled />显示偏差</Option>
              <ColorRow>
                <ColorName>颜色</ColorName>
                <ColorButton aria-label="颜色">
                  <Swatch $w={27} $c="#bdbdbd" />
                  <svg width="7" height="4" viewBox="0 0 7 4"><path d="M0 0H7L3.500 4Z" fill="#555" /></svg>
                </ColorButton>
              </ColorRow>
              <ColorRow><ColorName /><ColorButton aria-label="线型" /></ColorRow>
            </OptionBody>
            <VScroll>
              <ScrollEnd aria-label="向上"><Chevron d="M1 7 5 3 9 7" /></ScrollEnd>
              <VThumb />
              <VTrack />
              <ScrollEnd aria-label="向下"><Chevron d="M1 3 5 7 9 3" /></ScrollEnd>
            </VScroll>
          </Options>
          <PanelHead $h={21}>属性<Pin /></PanelHead>
          <Props>
            <PropTable>
              <colgroup><col width="21" /><col width="142" /><col /></colgroup>
              <tbody>
                <CategoryRow><td><Chevron c="#333" d="M1 3 5 7 9 3" /></td><th colSpan={2}>面类型</th></CategoryRow>
                <PropRow $off><td /><th>形状</th><td>圆柱</td></PropRow>
                <CategoryRow><td><Chevron c="#333" d="M1 3 5 7 9 3" /></td><th colSpan={2}>外观</th></CategoryRow>
                <PropRow $off $on>
                  <td /><th>颜色</th>
                  <td><ColorValue><Swatch $w={20} $c="#af8f8f" $line="#111" />ARGB: 255, 175, 143, 143</ColorValue></td>
                </PropRow>
                <PropRow><td /><th>样式</th><td>按主体, 按样式</td></PropRow>
              </tbody>
            </PropTable>
          </Props>
        </Side>

        <View>
          <Model />
          <Hint>通过延伸相邻的面移除所选面</Hint>
          <ViewTools>
            <ViewTool $big aria-label="选择面">
              <svg width="32" height="36" viewBox="0 0 32 36"><path d="M7 2V27L13 21 19 34 25 31 19 18H28Z" fill="url(#gold)" stroke="#eaa43c" strokeWidth="2" /><path d="M7 2V27L13 21 19 34 25 31 19 18H28Z" fill="none" stroke="#4f3a1c" strokeWidth="1" /></svg>
            </ViewTool>
            <ViewTool $off aria-label="引导曲线">
              <svg width="26" height="24" viewBox="0 0 26 24" opacity=".3" stroke="#777" strokeLinejoin="round"><path d="M1 11 8 8 25 12V18L17 23 1 17Z" fill="#efc0ae" /><path d="M1 11 17 17V23M17 17 25 12" fill="none" /><path d="M6 10C4 2 14 0 18 6L19 13 12 14C13 7 9 5 6 10Z" fill="#cfe3ee" /></svg>
            </ViewTool>
            <ViewTool $apart aria-label="完成">
              <svg width="28" height="28" viewBox="0 0 28 28"><path d="M2 16C4 15 7 16 10 20 13 12 19 4 26 1 21 9 16 18 13 27H10C8 21 5 17 2 16Z" fill="url(#tick)" /></svg>
            </ViewTool>
          </ViewTools>
        </View>
      </Main>

      <HScroll><ScrollEnd aria-label="向左"><Chevron c="#444" d="M7 1 3 5 7 9" /></ScrollEnd></HScroll>

      <Marks fill="#f53c37" aria-hidden>
        <path d="M112 44 420 73 542 85 544 79 561 91.500 540 101 541 94 410 81Z" />
        <path d="M554 138 312 322 117 466 118 470 100 473 110 457 113 460 306 319 490 184Z" />
        <path d="M87.500 466 85.500 325H81L89 305 97 325H92.500Z" />
        <path d="M191 304.500V306L382 328V332L399 324.500 382 316V319.500Z" />
        <rect x="583.500" y="48.500" width="50" height="81" fill="none" stroke="#f53c37" strokeWidth="3" />
      </Marks>
    </Window>
  );
}
